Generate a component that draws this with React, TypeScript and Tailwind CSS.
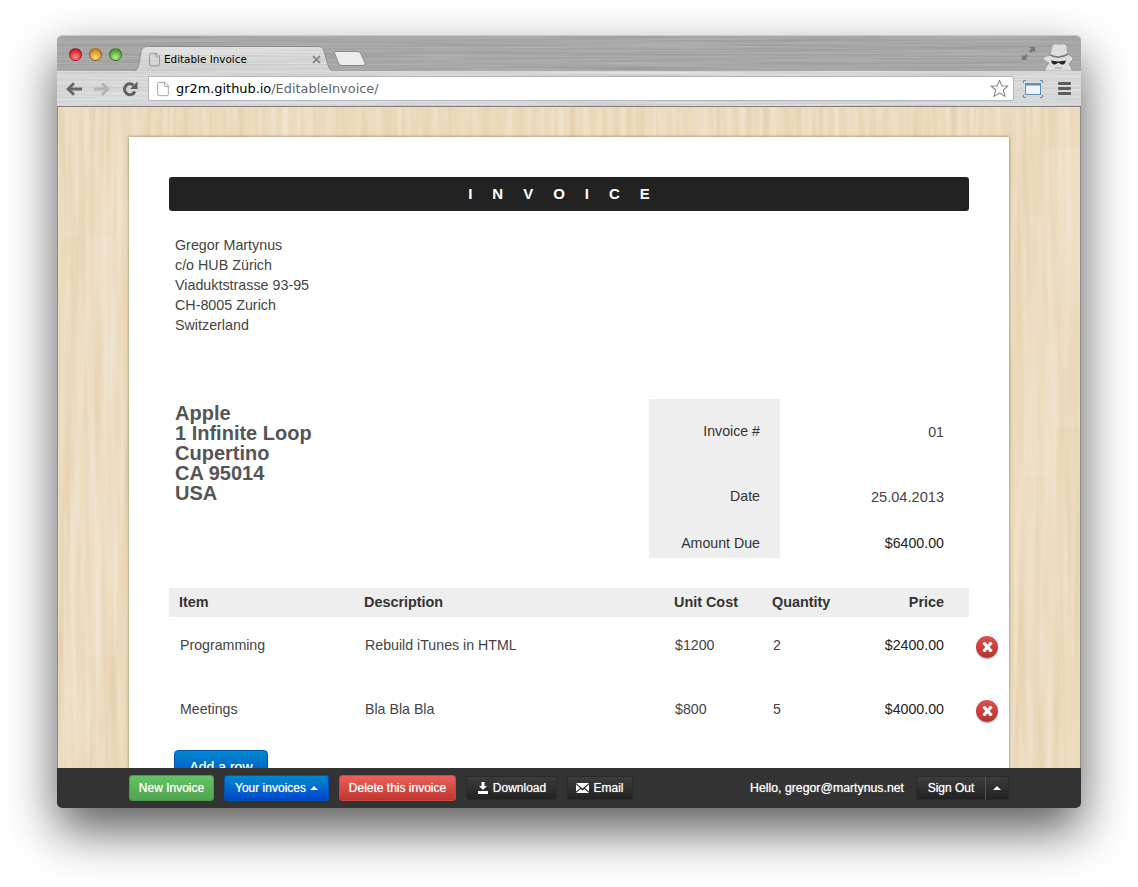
import type { ReactNode } from "react";
import { File } from "lucide-react";

function Dot({ className }: { className: string }) {
    return <span className={`size-[13px] rounded-full border border-black/35 ${className}`} />;
}

// brushed metal streaks, laid over the tab strip and the toolbar
function Brushed({ id, seed, alpha, shift }: { id: string; seed: number; alpha: string; shift: string }) {
    return (
        <svg className="absolute inset-0 size-full" preserveAspectRatio="none">
            <filter id={id} x="0" y="0" width="100%" height="100%">
                <feTurbulence type="fractalNoise" baseFrequency="0.006 0.7" numOctaves="2" seed={seed} />
                <feColorMatrix type="matrix" values={`0 0 0 0 0  0 0 0 0 0  0 0 0 0 0  ${alpha} 0 0 0 ${shift}`} />
            </filter>
            <rect width="100%" height="100%" filter={`url(#${id})`} />
        </svg>
    );
}

function Wood() {
    const planks = [
        { x: 0, y: 0, w: 28, h: 130, o: 0.06 },
        { x: 28, y: 130, w: 30, h: 420, o: 0.1 },
        { x: 0, y: 240, w: 28, h: 400, o: 0.04 },
        { x: 966, y: 110, w: 27, h: 260, o: 0.1 },
        { x: 993, y: 40, w: 30, h: 280, o: 0.09 },
        { x: 966, y: 370, w: 27, h: 300, o: 0.05 },
        { x: 200, y: 0, w: 60, h: 30, o: 0.07 },
        { x: 600, y: 0, w: 70, h: 30, o: 0.05 },
    ];
    return (
        <svg className="absolute inset-0 size-full">
            <filter id="grain" x="0" y="0" width="100%" height="100%">
                <feTurbulence type="fractalNoise" baseFrequency="0.09 0.004" numOctaves="3" seed={7} />
                <feColorMatrix type="matrix" values="0 0 0 0 0.62  0 0 0 0 0.43  0 0 0 0 0.2  0.6 0 0 0 -0.24" />
            </filter>
            <filter id="grainlight" x="0" y="0" width="100%" height="100%">
                <feTurbulence type="fractalNoise" baseFrequency="0.16 0.006" numOctaves="2" seed={21} />
                <feColorMatrix type="matrix" values="0 0 0 0 1  0 0 0 0 1  0 0 0 0 1  0.7 0 0 0 -0.28" />
            </filter>
            <rect width="100%" height="100%" filter="url(#grain)" />
            <rect width="100%" height="100%" filter="url(#grainlight)" />
            {planks.map((p) => (
                <rect key={`${p.x}-${p.y}`} x={p.x} y={p.y} width={p.w} height={p.h} fill="#fff" fillOpacity={p.o} />
            ))}
        </svg>
    );
}

function Tab() {
    return (
        <div className="relative ml-[-3px] flex h-[26px] w-[205px] items-center pl-[16px] pr-[15px] pt-[1px]">
            <svg className="absolute inset-0" width="205" height="26" viewBox="0 0 205 26">
                <defs>
                    <linearGradient id="tabfill" x1="0" y1="0" x2="0" y2="1">
                        <stop offset="0" stopColor="#e6e6e6" />
                        <stop offset="1" stopColor="#d9d9d9" />
                    </linearGradient>
                    <filter id="tabbrush" x="0" y="0" width="100%" height="100%">
                        <feTurbulence type="fractalNoise" baseFrequency="0.006 0.7" numOctaves="2" seed={4} />
                        <feColorMatrix type="matrix" values="0 0 0 0 0  0 0 0 0 0  0 0 0 0 0  0.2 0 0 0 -0.06" />
                        <feComposite in2="SourceAlpha" operator="in" />
                    </filter>
                </defs>
                <path d="M0 25.5C5 25.5 6 24 8 18L10 6C11 2 13 .5 17 .5H187C191 .5 192 2 193 5L197 19C199 24 200 25.5 205 25.5" fill="url(#tabfill)" stroke="#8f8f8f" />
                <path d="M0 25.5C5 25.5 6 24 8 18L10 6C11 2 13 .5 17 .5H187C191 .5 192 2 193 5L197 19C199 24 200 25.5 205 25.5" filter="url(#tabbrush)" />
            </svg>
            <File className="relative text-[#777]" size={15} strokeWidth={1} />
            <span className="relative ml-[2px] flex-1 font-['DejaVu_Sans',sans-serif] text-[10.4px] text-black">Editable Invoice</span>
            <svg className="relative" width="9" height="9" viewBox="0 0 9 9" stroke="#8a8a8a" strokeWidth="1.8">
                <path d="M1 1L8 8M8 1L1 8" />
            </svg>
        </div>
    );
}

function NewTab() {
    return (
        <svg className="ml-[-2px] mt-[5px]" width="32" height="15" viewBox="0 0 32 15">
            <path d="M1 .5H23C25 .5 26 1.5 27 3L31 12C31.6 13.6 30.5 14.5 28 14.5H8C6 14.5 5 13.5 4.5 12L.5 2C.3 1 .5 .5 1 .5Z" fill="#ececec" stroke="#8a8a8a" />
        </svg>
    );
}

function Incognito() {
    return (
        <svg width="32" height="28" viewBox="0 0 32 28" className="ml-[6px] mt-[7px]">
            <path d="M3 28C3 24 6 22 7 20C4 18 1 17 1 15C3 13 7 13 8 12L10 3C11 1 13 0 15 1C18 2 21 0 23 1C25 2 25 4 25 6L26 11C27 13 30 13 31 15C31 17 28 19 27 21C28 23 30 25 30 28Z" fill="#dedede" stroke="#8e8e8e" strokeWidth=".6" />
            <path d="M8 12C14 15 20 15 26 11" fill="none" stroke="#7d7d7d" strokeWidth="1.6" />
            <path d="M9 17.5L16 18.5L24 17.5L23 20C22 22 19 22 18 20.5L16.5 19.8L15 20.5C13 22 11 22 10 20Z" fill="#262626" />
            <path d="M13 25H20" stroke="#9a9a9a" strokeWidth="1" />
        </svg>
    );
}

function ExpandIcon() {
    return (
        <svg width="15" height="15" viewBox="0 0 16 16" className="mt-[10px]" fill="#777">
            <path d="M9 1H15V7L13 5L10.5 7.5L8.5 5.5L11 3Z" />
            <path d="M1 9V15H7L5 13L7.5 10.5L5.5 8.5L3 11Z" />
        </svg>
    );
}

function Arrow({ flip, color }: { flip?: boolean; color: string }) {
    return (
        <svg width="16" height="14" viewBox="0 0 16 14" className={flip ? "rotate-180" : ""} fill="none" stroke={color} strokeWidth="2.8">
            <path d="M16 7H3" />
            <path d="M8 1.2L2 7L8 12.8" />
        </svg>
    );
}

function Reload() {
    return (
        <svg width="16" height="16" viewBox="0 0 16 16">
            <path d="M12.8 10.5A5.4 5.4 0 1 1 11.5 4.2" fill="none" stroke="#5f5f5f" strokeWidth="3" />
            <path d="M15.5 .5V8H8Z" fill="#5f5f5f" />
        </svg>
    );
}

function Star() {
    return (
        <svg width="19" height="19" viewBox="0 0 19 19" className="shrink-0">
            <path d="M9.5 1.2L12 7H18L13.3 11L15 17.4L9.5 14L4 17.4L5.7 11L1 7H7Z" fill="#fff" stroke="#8b8b8b" strokeWidth="1.1" strokeLinejoin="round" />
        </svg>
    );
}

function CastIcon() {
    return (
        <svg width="20" height="18" viewBox="0 0 20 18">
            <rect x="2.5" y="3.5" width="15" height="11" fill="#eef3f7" stroke="#5f8fb5" />
            <rect x="2" y="3" width="16" height="2.5" fill="#5f8fb5" />
            <path d="M0.5 3V.5H3M17 .5H19.5V3M.5 15V17.5H3M17 17.5H19.5V15" fill="none" stroke="#5f8fb5" />
        </svg>
    );
}

function MenuIcon() {
    return (
        <div className="ml-[15px] flex w-[13px] flex-col gap-[2px]">
            <span className="h-[3px] rounded-[1px] bg-[#5c5c5c]" />
            <span className="h-[3px] rounded-[1px] bg-[#5c5c5c]" />
            <span className="h-[3px] rounded-[1px] bg-[#5c5c5c]" />
        </div>
    );
}

function BarButton({ className, children }: { className: string; children: ReactNode }) {
    return (
        <button className={`flex items-center justify-center gap-[4px] rounded-[3px] border text-[12px] text-white [text-shadow:0_0_1px_rgba(255,255,255,0.7)] ${className}`}>
            {children}
        </button>
    );
}

const darkBtn = "h-[24px] border-[#2a2a2a] bg-gradient-to-b from-[#3c3c3c] to-[#222222]";

function Caret() {
    return <span className="size-0 border-x-[4px] border-b-[4px] border-x-transparent border-b-white" />;
}

function DeleteButton() {
    return (
        <span className="flex size-[22px] items-center justify-center rounded-full bg-gradient-to-b from-[#dc4f4b] to-[#b8332f] shadow-[0_1px_1px_rgba(0,0,0,0.3)]">
            <svg width="11" height="10" viewBox="0 0 11 10" stroke="#fff" strokeWidth="3.2">
                <path d="M1.5 .5L9.5 9.5M9.5 .5L1.5 9.5" />
            </svg>
        </span>
    );
}

const rows = [
    { item: "Programming", description: "Rebuild iTunes in HTML", cost: "$1200", qty: "2", price: "$2400.00" },
    { item: "Meetings", description: "Bla Bla Bla", cost: "$800", qty: "5", price: "$4000.00" },
];

const tableCols = "grid grid-cols-[185px_310px_98px_1fr] pl-[10px] pr-[25px]";

export default function App() {
    return (
        <div className="h-[887px] w-[1138px] overflow-hidden bg-white pl-[57px] pt-[35px] font-['Liberation_Sans',Arial,sans-serif] text-[#444]">
            <div className="flex h-[773px] w-[1024px] flex-col overflow-hidden rounded-[5px] border-t border-[#c8c8c8] shadow-[0_22px_50px_rgba(0,0,0,0.65)]">
                <div className="relative flex h-[35px] shrink-0 bg-[#b0b0b0] pr-[7px]">
                    <Brushed id="strip" seed={3} alpha="0.22" shift="-0.06" />
                    <div className="relative ml-[12px] flex items-center gap-[7px] self-start pt-[12px]">
                        <Dot className="bg-[radial-gradient(circle_at_50%_75%,#ff8a8a,#d3222c_70%)]" />
                        <Dot className="bg-[radial-gradient(circle_at_50%_75%,#ffd98c,#d98a14_70%)]" />
                        <Dot className="bg-[radial-gradient(circle_at_50%_75%,#b6ee90,#4fa02c_70%)]" />
                    </div>
                    <div className="relative ml-[12px] mt-[10px] flex items-start">
                        <Tab />
                        <NewTab />
                    </div>
                    <div className="relative ml-auto flex items-start">
                        <ExpandIcon />
                        <Incognito />
                    </div>
                </div>
                <div className="relative flex h-[36px] shrink-0 items-center border-b border-[#7f7f7f] bg-[#e0e0e0] pl-[9px] pr-[11px]">
                    <Brushed id="toolbar" seed={9} alpha="0.2" shift="-0.06" />
                    <div className="relative flex items-center">
                        <Arrow color="#666" />
                        <div className="ml-[12px]">
                            <Arrow flip color="#b4b4b4" />
                        </div>
                        <div className="ml-[12px]">
                            <Reload />
                        </div>
                        <div className="ml-[10px] flex h-[25px] w-[866px] items-center rounded-[2px] border border-[#b5b5b5] bg-white pl-[6px] pr-[4px]">
                            <File size={16} strokeWidth={1} className="shrink-0 text-[#777]" />
                            <span className="ml-[5px] flex-1 font-['DejaVu_Sans',sans-serif] text-[12.9px] text-black">
                                gr2m.github.io<span className="text-[#5b6470]">/EditableInvoice/</span>
                            </span>
                            <Star />
                        </div>
                        <div className="ml-[9px]">
                            <CastIcon />
                        </div>
                        <MenuIcon />
                    </div>
                </div>
                <div className="relative flex-1 overflow-hidden border-x border-[#8e8e8e] bg-[#ecdabc] px-[71px] pt-[30px]">
                    <Wood />
                    <div className="relative h-[700px] w-[880px] bg-white px-[40px] pt-[40px] shadow-[0_0_3px_rgba(110,80,30,0.7)]">
                        <div className="flex h-[34px] items-center justify-center rounded-[3px] bg-[#222] text-[15px] font-bold tracking-[20px] text-white">
                            INVOICE
                        </div>
                        <div className="mt-[24px] pl-[6px] text-[14.3px] leading-[20px]">
                            <div>Gregor Martynus</div>
                            <div>c/o HUB Zürich</div>
                            <div>Viaduktstrasse 93-95</div>
                            <div>CH-8005 Zurich</div>
                            <div>Switzerland</div>
                        </div>
                        <div className="mt-[64px] flex justify-between">
                            <div className="pl-[6px] pt-[4px] text-[20px] font-bold leading-[20px] text-[#555]">
                                <div>Apple</div>
                                <div>1 Infinite Loop</div>
                                <div>Cupertino</div>
                                <div>CA 95014</div>
                                <div>USA</div>
                            </div>
                            <div className="grid w-[320px] grid-cols-[131px_1fr] grid-rows-[65px_64px_30px] items-center text-right text-[14.2px] text-[#333]">
                                <div className="flex h-full items-center justify-end bg-[#eee] pr-[20px]">Invoice #</div>
                                <div className="pr-[25px] pt-[3px] text-[#444]">01</div>
                                <div className="flex h-full items-center justify-end bg-[#eee] pr-[20px] pt-[2px]">Date</div>
                                <div className="pr-[25px] pt-[3px] text-[14.6px] text-[#444]">25.04.2013</div>
                                <div className="flex h-full items-center justify-end bg-[#eee] pr-[20px] pt-[2px]">Amount Due</div>
                                <div className="pr-[25px] pt-[2px] text-[#222]">$6400.00</div>
                            </div>
                        </div>
                        <div className={`${tableCols} mt-[30px] h-[29px] items-center bg-[#eee] text-[14.4px] font-bold text-[#333]`}>
                            <div>Item</div>
                            <div>Description</div>
                            <div>Unit Cost</div>
                            <div className="flex justify-between">
                                <span>Quantity</span>
                                <span>Price</span>
                            </div>
                        </div>
                        {rows.map((row) => (
                            <div key={row.item} className="mr-[-29px] flex h-[64px] items-start text-[14.2px]">
                                <div className={`${tableCols} w-[800px] pt-[20px] leading-[17px]`}>
                                    <div className="pl-[1px]">{row.item}</div>
                                    <div className="pl-[1px]">{row.description}</div>
                                    <div className="pl-[1px]">{row.cost}</div>
                                    <div className="flex justify-between pl-[1px]">
                                        <span>{row.qty}</span>
                                        <span className="text-[#222]">{row.price}</span>
                                    </div>
                                </div>
                                <div className="ml-[7px] mt-[19px]">
                                    <DeleteButton />
                                </div>
                            </div>
                        ))}
                        <button className="ml-[5px] mt-[5px] h-[34px] w-[94px] rounded-[4px] border border-[#0055b3] bg-gradient-to-b from-[#0088cc] to-[#0044cc] text-[14px] text-white [text-shadow:0_0_1px_rgba(255,255,255,0.6)]">
                            Add a row
                        </button>
                    </div>
                </div>
                <div className="flex h-[40px] shrink-0 items-center justify-between bg-[#333] px-[72px]">
                    <div className="flex items-center gap-[10px]">
                        <BarButton className="h-[26px] w-[85px] border-[#4c9a4c] bg-gradient-to-b from-[#62c462] to-[#51a351]">New Invoice</BarButton>
                        <BarButton className="h-[26px] w-[105px] border-[#0055b3] bg-gradient-to-b from-[#0088cc] to-[#0044cc]">
                            Your invoices
                            <Caret />
                        </BarButton>
                        <BarButton className="h-[26px] w-[117px] border-[#c24a45] bg-gradient-to-b from-[#ee5f5b] to-[#bd362f]">Delete this invoice</BarButton>
                        <BarButton className={`w-[91px] ${darkBtn}`}>
                            <svg width="12" height="12" viewBox="0 0 12 12" fill="#fff">
                                <path d="M4.5 0H7.5V4H10L6 8L2 4H4.5Z" />
                                <rect x="1" y="9" width="10" height="3" />
                            </svg>
                            Download
                        </BarButton>
                        <BarButton className={`w-[66px] ${darkBtn}`}>
                            <svg width="13" height="10" viewBox="0 0 13 10" fill="#fff">
                                <path d="M0 0H13L6.5 5.5Z" />
                                <path d="M0 1.5L4 5L0 8.5Z" />
                                <path d="M13 1.5L9 5L13 8.5Z" />
                                <path d="M0 10L4.7 6L6.5 7.5L8.3 6L13 10Z" />
                            </svg>
                            Email
                        </BarButton>
                    </div>
                    <div className="flex items-center">
                        <span className="mr-[12px] text-[12.3px] text-white [text-shadow:0_0_1px_rgba(255,255,255,0.7)]">Hello, gregor@martynus.net</span>
                        <BarButton className={`w-[69px] rounded-r-none border-r-0 ${darkBtn}`}>Sign Out</BarButton>
                        <BarButton className={`w-[24px] rounded-l-none border-l-[#555] ${darkBtn}`}>
                            <Caret />
                        </BarButton>
                    </div>
                </div>
            </div>
        </div>
    );
}
